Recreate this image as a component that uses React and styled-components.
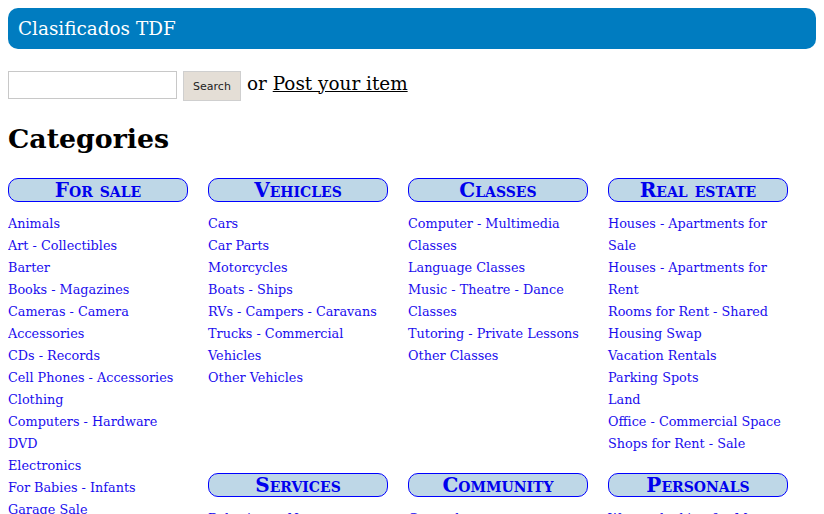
import styled, { createGlobalStyle } from "styled-components";

const GlobalStyle = createGlobalStyle`
  body {
    margin: 8px;
    font-family: "DejaVu Serif", serif;
    background: #fff;
    color: #000;
  }
`;

const categories = [
  {
    title: "For sale",
    tall: true,
    items: [
      "Animals",
      "Art - Collectibles",
      "Barter",
      "Books - Magazines",
      "Cameras - Camera Accessories",
      "CDs - Records",
      "Cell Phones - Accessories",
      "Clothing",
      "Computers - Hardware",
      "DVD",
      "Electronics",
      "For Babies - Infants",
      "Garage Sale",
      "Health - Beauty",
    ],
  },
  {
    title: "Vehicles",
    items: [
      "Cars",
      "Car Parts",
      "Motorcycles",
      "Boats - Ships",
      "RVs - Campers - Caravans",
      "Trucks - Commercial Vehicles",
      "Other Vehicles",
    ],
  },
  {
    title: "Classes",
    items: [
      "Computer - Multimedia Classes",
      "Language Classes",
      "Music - Theatre - Dance Classes",
      "Tutoring - Private Lessons",
      "Other Classes",
    ],
  },
  {
    title: "Real estate",
    items: [
      "Houses - Apartments for Sale",
      "Houses - Apartments for Rent",
      "Rooms for Rent - Shared",
      "Housing Swap",
      "Vacation Rentals",
      "Parking Spots",
      "Land",
      "Office - Commercial Space",
      "Shops for Rent - Sale",
    ],
  },
  { title: "Services", items: ["Babysitter - Nanny", "Casting - Auditions"] },
  { title: "Community", items: ["General", "Carpool"] },
  { title: "Personals", items: ["Women looking for Men", "Men looking for Women"] },
];

export default function App() {
  return (
    <>
      <GlobalStyle />
      <Header>Clasificados TDF</Header>

      <SearchRow>
        <SearchInput type="text" />
        <SearchButton>Search</SearchButton>
        <span>
          or <PostLink href="#">Post your item</PostLink>
        </span>
      </SearchRow>

      <Title>Categories</Title>

      <Grid>
        {categories.map((cat) => (
          <Block key={cat.title} $tall={cat.tall}>
            <BlockTitle>{cat.title}</BlockTitle>
            <LinkList>
              {cat.items.map((item) => (
                <li key={item}>
                  <a href="#">{item}</a>
                </li>
              ))}
            </LinkList>
          </Block>
        ))}
      </Grid>
    </>
  );
}

const Header = styled.div`
  background-color: #007cc0;
  color: #fff;
  border-radius: 10px;
  height: 41px;
  display: flex;
  align-items: center;
  padding-left: 10px;
  font-size: 18.4px;
`;

const SearchRow = styled.div`
  display: flex;
  align-items: baseline;
  margin-top: 22px;
  font-size: 18.4px;
`;

const SearchInput = styled.input`
  width: 165px;
  height: 24px;
  border: 1px solid #c8c8c8;
  padding: 1px;
  margin: 0;
`;

const SearchButton = styled.button`
  margin: 0 6px 0 6px;
  width: 58px;
  height: 30px;
  background: #e4ded6;
  border: 1px solid #cfcfcf;
  font-family: "DejaVu Sans", sans-serif;
  font-size: 11px;
  color: #222;
  padding: 0;
`;

const PostLink = styled.a`
  color: #000;
  text-decoration: underline;
`;

const Title = styled.h1`
  font-size: 26.8px;
  font-weight: bold;
  margin: 22px 0 24px 0;
`;

const Grid = styled.div`
  display: grid;
  grid-template-columns: repeat(4, 180px);
  column-gap: 20px;
  row-gap: 18px;
  align-items: start;
`;

const Block = styled.div`
  grid-row: ${(p) => (p.$tall ? "span 2" : "auto")};
`;

const BlockTitle = styled.div`
  background: #bed7e7;
  border: 1px solid #0000ff;
  border-radius: 10px;
  height: 22px;
  line-height: 23px;
  text-align: center;
  color: #0000ee;
  font-weight: bold;
  font-variant: small-caps;
  font-size: 20px;
`;

const LinkList = styled.ul`
  list-style: none;
  margin: 11px 0 0 0;
  padding: 0;
  font-size: 12.8px;
  line-height: 22px;

  a {
    color: #1a0dee;
    text-decoration: none;
  }
`;
